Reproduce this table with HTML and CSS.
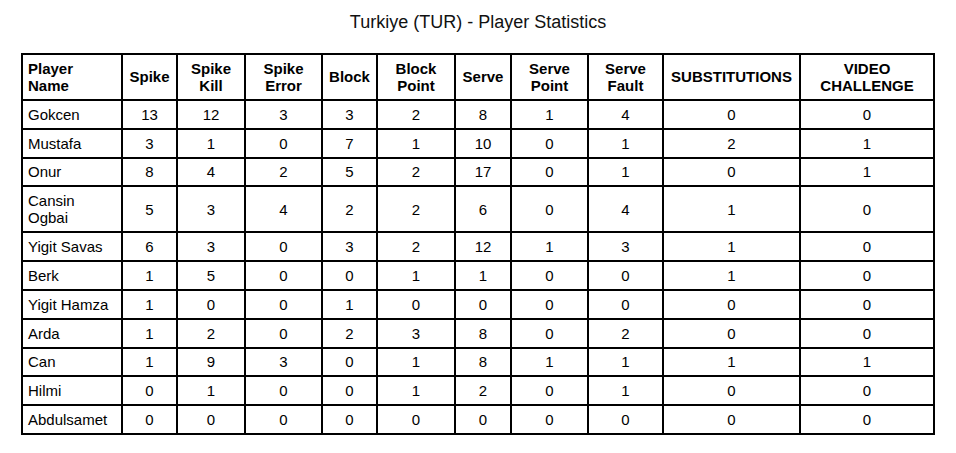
FILE: index.html
```html
<!DOCTYPE html>
<html lang="en">
<head>
<meta charset="utf-8">
<title>Turkiye (TUR) - Player Statistics</title>
<link rel="stylesheet" href="styles.css">
</head>
<body>
<h1 class="title">Turkiye (TUR) - Player Statistics</h1>
<table class="stats">
  <colgroup>
    <col class="c-name">
    <col class="c-spike">
    <col class="c-kill">
    <col class="c-err">
    <col class="c-block">
    <col class="c-bpoint">
    <col class="c-serve">
    <col class="c-spoint">
    <col class="c-sfault">
    <col class="c-subs">
    <col class="c-video">
  </colgroup>
  <thead>
    <tr>
      <th class="name">Player<br>Name</th>
      <th>Spike</th>
      <th>Spike<br>Kill</th>
      <th>Spike<br>Error</th>
      <th>Block</th>
      <th>Block<br>Point</th>
      <th>Serve</th>
      <th>Serve<br>Point</th>
      <th>Serve<br>Fault</th>
      <th>SUBSTITUTIONS</th>
      <th>VIDEO<br>CHALLENGE</th>
    </tr>
  </thead>
  <tbody>
    <tr><td class="name">Gokcen</td><td>13</td><td>12</td><td>3</td><td>3</td><td>2</td><td>8</td><td>1</td><td>4</td><td>0</td><td>0</td></tr>
    <tr><td class="name">Mustafa</td><td>3</td><td>1</td><td>0</td><td>7</td><td>1</td><td>10</td><td>0</td><td>1</td><td>2</td><td>1</td></tr>
    <tr><td class="name">Onur</td><td>8</td><td>4</td><td>2</td><td>5</td><td>2</td><td>17</td><td>0</td><td>1</td><td>0</td><td>1</td></tr>
    <tr><td class="name">Cansin<br>Ogbai</td><td>5</td><td>3</td><td>4</td><td>2</td><td>2</td><td>6</td><td>0</td><td>4</td><td>1</td><td>0</td></tr>
    <tr><td class="name">Yigit Savas</td><td>6</td><td>3</td><td>0</td><td>3</td><td>2</td><td>12</td><td>1</td><td>3</td><td>1</td><td>0</td></tr>
    <tr><td class="name">Berk</td><td>1</td><td>5</td><td>0</td><td>0</td><td>1</td><td>1</td><td>0</td><td>0</td><td>1</td><td>0</td></tr>
    <tr><td class="name">Yigit Hamza</td><td>1</td><td>0</td><td>0</td><td>1</td><td>0</td><td>0</td><td>0</td><td>0</td><td>0</td><td>0</td></tr>
    <tr><td class="name">Arda</td><td>1</td><td>2</td><td>0</td><td>2</td><td>3</td><td>8</td><td>0</td><td>2</td><td>0</td><td>0</td></tr>
    <tr><td class="name">Can</td><td>1</td><td>9</td><td>3</td><td>0</td><td>1</td><td>8</td><td>1</td><td>1</td><td>1</td><td>1</td></tr>
    <tr><td class="name">Hilmi</td><td>0</td><td>1</td><td>0</td><td>0</td><td>1</td><td>2</td><td>0</td><td>1</td><td>0</td><td>0</td></tr>
    <tr><td class="name">Abdulsamet</td><td>0</td><td>0</td><td>0</td><td>0</td><td>0</td><td>0</td><td>0</td><td>0</td><td>0</td><td>0</td></tr>
  </tbody>
</table>
</body>
</html>
```
FILE: styles.css
```css
html, body {
  margin: 0;
  padding: 0;
  background: #fff;
}

body {
  font-family: "Liberation Sans", Arial, sans-serif;
  color: #000;
}

.title {
  margin: 12px 0 20px;
  font-size: 18px;
  line-height: 21px;
  font-weight: normal;
  text-align: center;
  color: #111;
}

.stats {
  width: 914px;
  margin: 0 auto;
  border-collapse: collapse;
  table-layout: fixed;
  border: 2px solid #000;
  font-size: 15px;
  line-height: 17.2px;
}

.stats th,
.stats td {
  border: 2px solid #000;
  padding: 4.8px 5px;
  text-align: center;
  vertical-align: middle;
}

.stats th {
  font-weight: bold;
}

.stats .name {
  text-align: left;
}

.c-name { width: 100px; }
.c-spike { width: 55px; }
.c-kill { width: 68px; }
.c-err { width: 77px; }
.c-block { width: 55px; }
.c-bpoint { width: 78px; }
.c-serve { width: 56px; }
.c-spoint { width: 77px; }
.c-sfault { width: 75px; }
.c-subs { width: 137px; }
.c-video { width: 134px; }
```
